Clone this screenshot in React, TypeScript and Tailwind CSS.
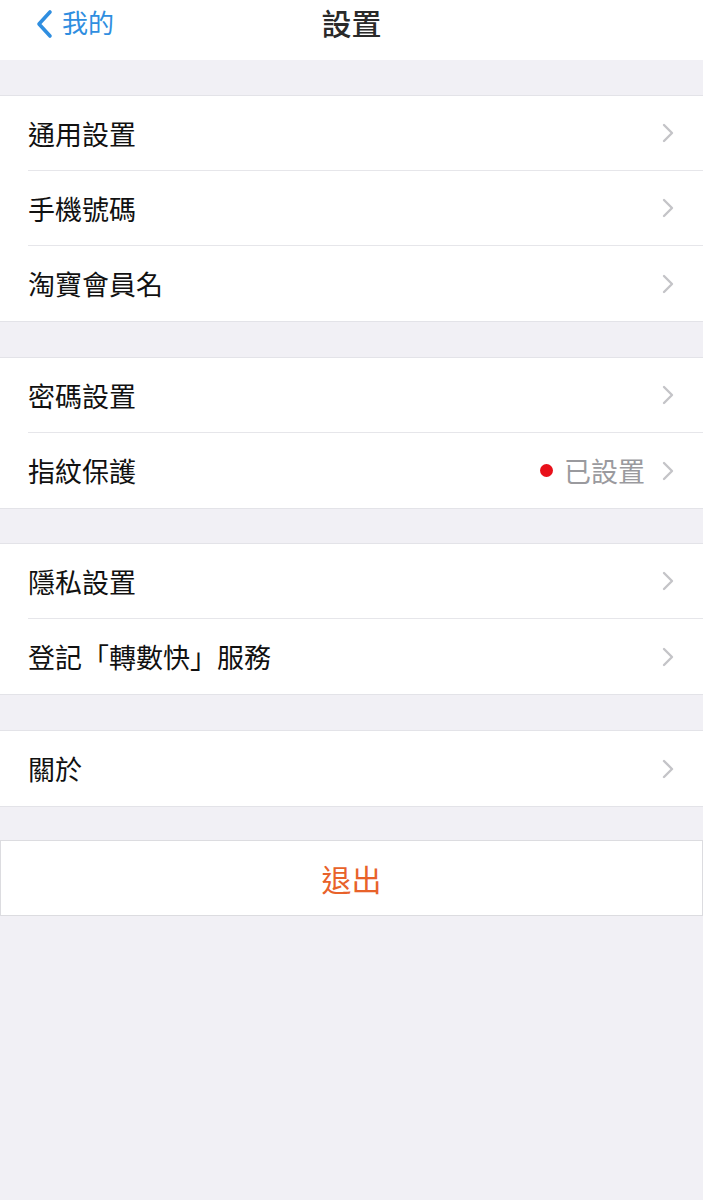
import React from "react";

const font = {
  fontFamily: '"Noto Sans CJK TC", "Noto Sans", sans-serif',
};

function Chevron() {
  return (
    <svg width="16" height="20" viewBox="0 0 16 20" className="shrink-0">
      <path
        d="M4 2 L12 10 L4 18"
        fill="none"
        stroke="#c4c4c8"
        strokeWidth="2.4"
        strokeLinecap="round"
        strokeLinejoin="round"
      />
    </svg>
  );
}

interface RowProps {
  label: string;
  last?: boolean;
  extra?: React.ReactNode;
}

function Row({ label, last, extra }: RowProps) {
  return (
    <div className="flex h-[75px] items-stretch pl-7 bg-white">
      <div
        className={`flex flex-1 items-center pr-[27px] ${
          last ? "" : "border-b border-[#e6e6ea]"
        }`}
      >
        <span className="flex-1 text-[27px] leading-none text-[#111]">
          {label}
        </span>
        {extra}
        <Chevron />
      </div>
    </div>
  );
}

function Group({ children }: { children: React.ReactNode }) {
  return (
    <div className="border-y border-[#e3e3e8] bg-white">{children}</div>
  );
}

export default function App() {
  return (
    <div className="min-h-[1200px] bg-[#f1f0f5]" style={font}>
      {/* Nav bar */}
      <div className="relative flex h-[60px] items-center justify-center bg-white">
        <div className="absolute left-[34px] top-[9px] flex items-center gap-[8px]">
          <svg width="20" height="30" viewBox="0 0 20 30">
            <path
              d="M16 3 L5 15 L16 27"
              fill="none"
              stroke="#2f8ee0"
              strokeWidth="3.6"
              strokeLinecap="round"
              strokeLinejoin="round"
            />
          </svg>
          <span className="-mt-[4px] text-[26px] leading-none text-[#2f8ee0]">
            我的
          </span>
        </div>
        <span className="-mt-[16px] text-[30px] font-medium leading-none text-[#2a2a2a]">
          設置
        </span>
      </div>

      <div className="h-[35px]" />
      <Group>
        <Row label="通用設置" />
        <Row label="手機號碼" />
        <Row label="淘寶會員名" last />
      </Group>

      <div className="h-[35px]" />
      <Group>
        <Row label="密碼設置" />
        <Row
          label="指紋保護"
          last
          extra={
            <div className="mr-[15px] flex items-center gap-[11px]">
              <span className="h-[13px] w-[13px] rounded-full bg-[#e8101a]" />
              <span className="text-[27px] leading-none text-[#9a9a9e]">
                已設置
              </span>
            </div>
          }
        />
      </Group>

      <div className="h-[34px]" />
      <Group>
        <Row label="隱私設置" />
        <Row label="登記「轉數快」服務" last />
      </Group>

      <div className="h-[35px]" />
      <Group>
        <Row label="關於" last />
      </Group>

      <div className="h-[33px]" />
      <div className="flex h-[76px] items-center justify-center border border-[#dcdce0] bg-white">
        <span className="text-[30px] leading-none text-[#e8622a]">退出</span>
      </div>
    </div>
  );
}
